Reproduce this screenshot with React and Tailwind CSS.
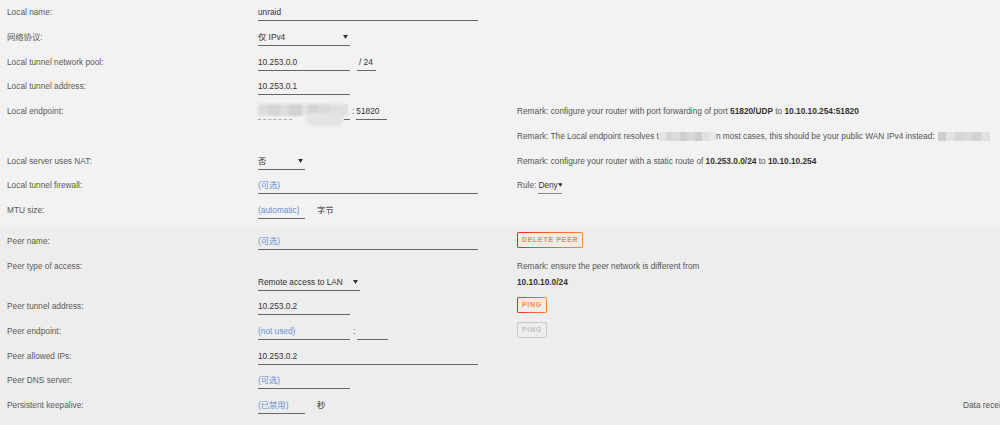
import React from 'react'

const font = "font-['Liberation_Sans','Noto_Sans_CJK_SC',sans-serif]"

const Arrow = () => (
  <svg width="5" height="4" viewBox="0 0 5 4" className="mt-[3px]">
    <path d="M0 0 L5 0 L2.5 4 Z" fill="#333" />
  </svg>
)

const Field = ({ value, placeholder, className = '' }) => (
  <div className={`pt-[7px] pb-[3px] border-b border-[#666] leading-[10px] h-[21px] ${className}`}>
    {value ? <span className="text-[#333]">{value}</span> : <span className="text-[#6a8fd6]">{placeholder}</span>}
  </div>
)

const Select = ({ value, className = '' }) => (
  <div className={`flex justify-between pr-[2px] pt-[7px] pb-[3px] border-b border-[#666] leading-[10px] h-[21px] text-[#333] ${className}`}>
    <span>{value}</span>
    <Arrow />
  </div>
)

const Button = ({ children, off }) => (
  <div className={`inline-flex rounded-[2px] p-px ${off ? 'bg-[#c9c9c9]' : 'bg-gradient-to-r from-[#e22828] to-[#ff8c2f]'}`}>
    <div className={`h-[14px] px-[4px] flex items-center rounded-[1px] bg-[#ededed] text-[7px] font-bold tracking-[0.7px] ${off ? 'text-[#c2c2c2]' : 'text-[#fb8a35]'}`}>
      {children}
    </div>
  </div>
)

const Blur = ({ w, shades }) => (
  <span className={`inline-flex align-middle h-[9px] blur-[0.6px] ${w}`}>
    {shades.map((c, i) => (
      <span key={i} className="flex-1 h-full" style={{ background: c }} />
    ))}
  </span>
)

const Row = ({ label, field, right, far, tall }) => (
  <div className={`grid grid-cols-[258px_259px_446px_1fr] ${tall ? 'h-[40.25px]' : 'h-[24.75px]'}`}>
    <div className="pl-[7px] pt-[7px] leading-[10px] text-[#5a5a5a]">{label}</div>
    <div className="flex items-start">{field}</div>
    <div className="text-[#555] leading-[10px]">{right}</div>
    <div className="pt-[7px] leading-[10px] text-[#555] whitespace-nowrap">{far}</div>
  </div>
)

const B = ({ children }) => <b className="font-bold text-[#333]">{children}</b>

export default function App() {
  return (
    <div className={`${font} text-[8.3px] w-[1000px] h-[425px] overflow-hidden flex flex-col bg-[#ededed]`}>
      <div className="bg-[#f2f2f2] h-[227px]">
        <Row label="Local name:" field={<Field value="unraid" className="w-[220px]" />} />
        <Row label="网络协议:" field={<Select value="仅 IPv4" className="w-[92px]" />} />
        <Row
          label="Local tunnel network pool:"
          field={
            <>
              <Field value="10.253.0.0" className="w-[92px]" />
              <div className="ml-[7px] w-[19px] pl-[2px] pt-[7px] pb-[3px] border-b border-[#666] leading-[10px] h-[21px] text-[#333] whitespace-nowrap">/ 24</div>
            </>
          }
        />
        <Row label="Local tunnel address:" field={<Field value="10.253.0.1" className="w-[92px]" />} />
        <Row
          label="Local endpoint:"
          field={
            <>
              <div className="relative w-[92px] h-[21px]">
                <div className="absolute left-0 bottom-0 w-[34px] border-b border-dashed border-[#aaa]" />
                <div className="absolute left-0 top-[5px] flex h-[12px] w-[90px] blur-[0.8px]">
                  <span className="w-[10px] bg-[#dcdcdc]" />
                  <span className="w-[12px] bg-[#d6d6d6]" />
                  <span className="w-[8px] bg-[#dedede]" />
                  <span className="w-[14px] bg-[#d2d2d2]" />
                  <span className="w-[6px] bg-[#e2e2e2]" />
                  <span className="w-[10px] bg-[#d4d4d4]" />
                  <span className="w-[12px] bg-[#dadada]" />
                  <span className="w-[18px] bg-[#e0e0e0]" />
                </div>
                <div className="absolute left-[48px] top-[14px] w-[38px] h-[13px] rounded-full bg-[#e4e4e4] blur-[1px]" />
                <div className="absolute right-0 bottom-0 w-[6px] border-b border-[#666]" />
              </div>
              <span className="ml-[2px] pt-[7px] leading-[10px] text-[#555]">:</span>
              <Field value="51820" className="ml-[2px] w-[31px]" />
            </>
          }
          right={
            <div className="pt-[7px] whitespace-nowrap">
              Remark: configure your router with port forwarding of port <B>51820/UDP</B> to <B>10.10.10.254:51820</B>
            </div>
          }
        />
        <Row
          right={
            <div className="pt-[7px] whitespace-nowrap">
              Remark: The Local endpoint resolves t
              <Blur w="w-[57px]" shades={['#e4e4e4', '#d6d6d6', '#dcdcdc', '#cfcfcf', '#d8d8d8', '#cdcdcd', '#e0e0e0', '#e8e8e8']} />
              n most cases, this should be your public WAN IPv4 instead:
              <span className="ml-[3px]" />
              <Blur w="w-[52px]" shades={['#cfcfcf', '#e2e2e2', '#d6d6d6', '#dadada', '#d2d2d2', '#e0e0e0']} />
            </div>
          }
        />
        <Row
          label="Local server uses NAT:"
          field={<Select value="否" className="w-[47px]" />}
          right={
            <div className="pt-[7px] whitespace-nowrap">
              Remark: configure your router with a static route of <B>10.253.0.0/24</B> to <B>10.10.10.254</B>
            </div>
          }
        />
        <Row
          label="Local tunnel firewall:"
          field={<Field placeholder="(可选)" className="w-[220px]" />}
          right={
            <div className="flex items-start">
              <span className="pt-[7px]">Rule:</span>
              <div className="ml-[2px] w-[24px] flex justify-between pt-[7px] pb-[3px] border-b border-[#888] h-[21px] text-[#333]">
                <span>Deny</span>
                <Arrow />
              </div>
            </div>
          }
        />
        <Row
          label="MTU size:"
          field={
            <>
              <Field placeholder="(automatic)" className="w-[47px]" />
              <span className="ml-[12px] pt-[7px] leading-[10px] text-[#333]">字节</span>
            </>
          }
        />
      </div>

      <div className="flex-1 pt-[2px] bg-[#ededed]">
        <Row
          label="Peer name:"
          field={<Field placeholder="(可选)" className="w-[220px]" />}
          right={<div className="pt-[3px]"><Button>DELETE PEER</Button></div>}
        />
        <Row
          tall
          label="Peer type of access:"
          field={<div className="pt-[16px]"><Select value="Remote access to LAN" className="w-[102px]" /></div>}
          right={
            <div className="pt-[7px]">
              <div>Remark: ensure the peer network is different from</div>
              <div className="mt-[6px]"><B>10.10.10.0/24</B></div>
            </div>
          }
        />
        <Row
          label="Peer tunnel address:"
          field={<Field value="10.253.0.2" className="w-[92px]" />}
          right={<div className="pt-[3px]"><Button>PING</Button></div>}
        />
        <Row
          label="Peer endpoint:"
          field={
            <>
              <Field placeholder="(not used)" className="w-[92px]" />
              <span className="ml-[3px] pt-[7px] leading-[10px] text-[#555]">:</span>
              <Field value="" placeholder="" className="ml-[2px] w-[31px]" />
            </>
          }
          right={<div className="pt-[3px]"><Button off>PING</Button></div>}
        />
        <Row label="Peer allowed IPs:" field={<Field value="10.253.0.2" className="w-[220px]" />} />
        <Row label="Peer DNS server:" field={<Field placeholder="(可选)" className="w-[92px]" />} />
        <Row
          label="Persistent keepalive:"
          field={
            <>
              <Field placeholder="(已禁用)" className="w-[47px]" />
              <span className="ml-[12px] pt-[7px] leading-[10px] text-[#333]">秒</span>
            </>
          }
          far="Data received"
        />
      </div>
    </div>
  )
}
